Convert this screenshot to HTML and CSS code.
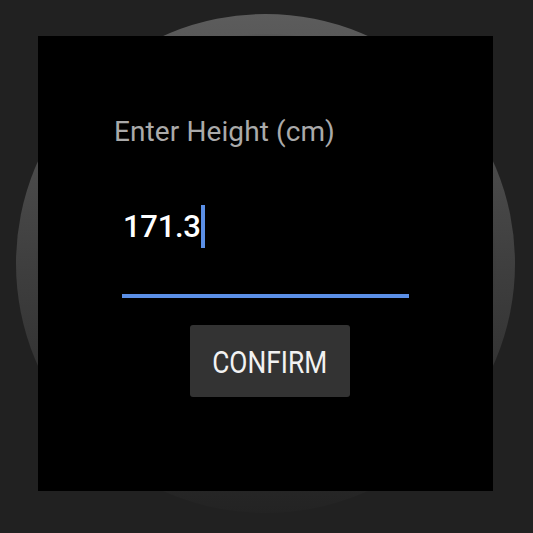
FILE: index.html
```html
<!DOCTYPE html>
<html>
<head>
<meta charset="utf-8">
<link rel="stylesheet" href="styles.css">
</head>
<body>
<div class="stage">
  <div class="bezel"><div class="bezel-inner"></div></div>
  <div class="screen">
    <div class="label">Enter Height (cm)</div>
    <div class="field">
      <div class="value"><span class="text">171.3</span><span class="cursor"></span></div>
    </div>
    <button class="confirm"><span class="confirm-text">CONFIRM</span></button>
  </div>
</div>
</body>
</html>
```
FILE: styles.css
```css
html, body {
  margin: 0;
  padding: 0;
  background: #212121;
}
.stage {
  position: relative;
  width: 533px;
  height: 533px;
  overflow: hidden;
  padding: 36px 0 0 38px;
  box-sizing: border-box;
  font-family: Roboto, "Noto Sans", sans-serif;
}
.bezel {
  position: absolute;
  left: 16px;
  top: 14px;
  width: 499px;
  height: 499px;
  border-radius: 50%;
  background: linear-gradient(to bottom, #5c5c5c 0%, #3f3f3f 50%, #232323 100%);
  display: flex;
  align-items: center;
  justify-content: center;
}
.bezel-inner {
  width: 460px;
  height: 460px;
  border-radius: 50%;
  background: linear-gradient(to bottom, #565656 0%, #3e3e3e 50%, #252525 100%);
}
.screen {
  position: relative;
  width: 455px;
  height: 455px;
  background: #000;
  display: flex;
  flex-direction: column;
  align-items: flex-start;
  padding-top: 82px;
  box-sizing: border-box;
}
.label {
  margin-left: 76px;
  font-size: 28px;
  line-height: 28px;
  color: #aaaaaa;
  letter-spacing: 0.1px;
}
.field {
  margin-top: 59px;
  margin-left: 84px;
  width: 287px;
  padding-left: 1px;
  padding-bottom: 46px;
  box-sizing: border-box;
  border-bottom: 4px solid #5b8fe6;
}
.value {
  display: flex;
  align-items: flex-start;
}
.text {
  margin-top: 6px;
  font-size: 31px;
  line-height: 31px;
  color: #fff;
  font-weight: 500;
  letter-spacing: -0.3px;
}
.cursor {
  width: 4px;
  height: 43px;
  margin-left: 0;
  background: #5b8fe6;
}
.confirm {
  margin-top: 27px;
  margin-left: 152px;
  width: 160px;
  height: 72px;
  border: none;
  border-radius: 3px;
  background: #333333;
  padding: 0;
  display: flex;
  align-items: center;
  justify-content: center;
  font-family: Roboto, "Noto Sans", sans-serif;
}
.confirm-text {
  display: inline-block;
  font-size: 31px;
  line-height: 31px;
  color: #f2f2f2;
  transform: scaleX(0.85);
  margin-top: 2px;
}
```
